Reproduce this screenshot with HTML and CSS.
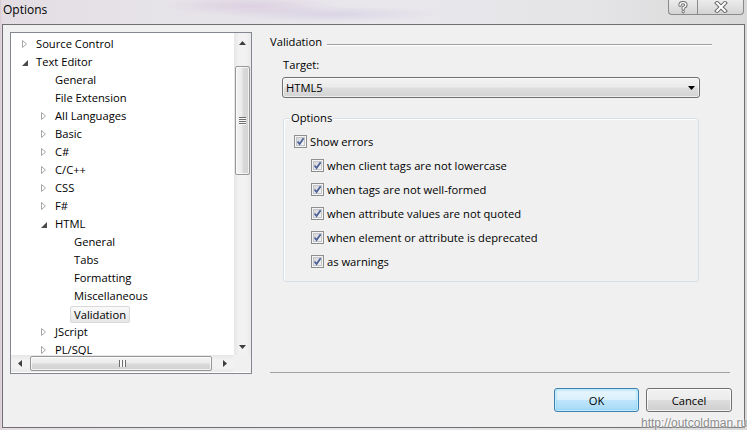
FILE: index.html
```html
<!DOCTYPE html>
<html>
<head>
<meta charset="utf-8">
<title>Options</title>
<link rel="stylesheet" href="styles.css">
</head>
<body>
<svg class="defs" width="0" height="0">
  <defs>
    <linearGradient id="cbIn" x1="0" y1="0" x2="1" y2="1">
      <stop offset="0" stop-color="#cfd2d8"/>
      <stop offset="1" stop-color="#f7f7f7"/>
    </linearGradient>
    <symbol id="cb" viewBox="0 0 13 13">
      <rect x="0.5" y="0.5" width="12" height="12" fill="#f4f4f4" stroke="#8e8f8f"/>
      <rect x="2.5" y="2.5" width="8" height="8" fill="url(#cbIn)" stroke="#c3c5c9"/>
      <path d="M3.6 6.4 L5.6 9 L9.6 3.3" fill="none" stroke="#4a5e95" stroke-width="1.7"/>
    </symbol>
    <symbol id="col" viewBox="0 0 5 8">
      <path d="M0.5 0.5 L4.5 4 L0.5 7.5 Z" fill="#fff" stroke="#a6a6a6"/>
    </symbol>
    <symbol id="exp" viewBox="0 0 6 6">
      <path d="M6 0 L6 6 L0 6 Z" fill="#4a4a4a"/>
    </symbol>
  </defs>
</svg>
<div class="window">
  <div class="titlebar">
    <span class="title">Options</span>
    <div class="caption">
      <span class="cap-btn help">
        <svg width="12" height="13" viewBox="0 0 12 13">
          <path d="M3 4.2 Q3 1.6 6 1.6 Q9 1.6 9 4 Q9 5.6 6.2 6.6 L6.2 8" fill="none" stroke="#6a6a6a" stroke-width="3.2" stroke-linecap="round"/>
          <circle cx="6.2" cy="10.8" r="1.6" fill="#6a6a6a"/>
          <path d="M3 4.2 Q3 1.6 6 1.6 Q9 1.6 9 4 Q9 5.6 6.2 6.6 L6.2 8" fill="none" stroke="#fff" stroke-width="1.4" stroke-linecap="round"/>
          <circle cx="6.2" cy="10.8" r="0.8" fill="#fff"/>
        </svg>
      </span>
      <span class="cap-btn close">
        <svg width="14" height="12" viewBox="0 0 14 12">
          <path d="M3 2 L11 10 M11 2 L3 10" stroke="#6a6a6a" stroke-width="4" stroke-linecap="square"/>
          <path d="M3 2 L11 10 M11 2 L3 10" stroke="#fff" stroke-width="2" stroke-linecap="square"/>
        </svg>
      </span>
    </div>
  </div>

  <div class="frame">
    <div class="tree">
      <div class="tree-body">
        <ul class="tree-list">
          <li class="row l0"><span class="exp"><svg class="tri-c"><use href="#col"/></svg></span><span class="txt">Source Control</span></li>
          <li class="row l0"><span class="exp"><svg class="tri-e"><use href="#exp"/></svg></span><span class="txt">Text Editor</span></li>
          <li class="row l1"><span class="exp"></span><span class="txt">General</span></li>
          <li class="row l1"><span class="exp"></span><span class="txt">File Extension</span></li>
          <li class="row l1"><span class="exp"><svg class="tri-c"><use href="#col"/></svg></span><span class="txt">All Languages</span></li>
          <li class="row l1"><span class="exp"><svg class="tri-c"><use href="#col"/></svg></span><span class="txt">Basic</span></li>
          <li class="row l1"><span class="exp"><svg class="tri-c"><use href="#col"/></svg></span><span class="txt">C#</span></li>
          <li class="row l1"><span class="exp"><svg class="tri-c"><use href="#col"/></svg></span><span class="txt">C/C++</span></li>
          <li class="row l1"><span class="exp"><svg class="tri-c"><use href="#col"/></svg></span><span class="txt">CSS</span></li>
          <li class="row l1"><span class="exp"><svg class="tri-c"><use href="#col"/></svg></span><span class="txt">F#</span></li>
          <li class="row l1"><span class="exp"><svg class="tri-e"><use href="#exp"/></svg></span><span class="txt">HTML</span></li>
          <li class="row l2"><span class="exp"></span><span class="txt">General</span></li>
          <li class="row l2"><span class="exp"></span><span class="txt">Tabs</span></li>
          <li class="row l2"><span class="exp"></span><span class="txt">Formatting</span></li>
          <li class="row l2"><span class="exp"></span><span class="txt">Miscellaneous</span></li>
          <li class="row l2"><span class="exp"></span><span class="txt selected">Validation</span></li>
          <li class="row l1"><span class="exp"><svg class="tri-c"><use href="#col"/></svg></span><span class="txt">JScript</span></li>
          <li class="row l1"><span class="exp"><svg class="tri-c"><use href="#col"/></svg></span><span class="txt">PL/SQL</span></li>
        </ul>
        <div class="vscroll">
          <div class="sb-btn"><svg width="7" height="4" viewBox="0 0 7 4"><path d="M3.5 0 L7 4 L0 4 Z" fill="#3f3f3f"/></svg></div>
          <div class="vtrack"><div class="vthumb"><span class="grip-h"></span></div></div>
          <div class="sb-btn"><svg width="7" height="4" viewBox="0 0 7 4"><path d="M0 0 L7 0 L3.5 4 Z" fill="#3f3f3f"/></svg></div>
        </div>
      </div>
      <div class="hscroll">
        <div class="sb-btn"><svg width="4" height="7" viewBox="0 0 4 7"><path d="M0 3.5 L4 0 L4 7 Z" fill="#3f3f3f"/></svg></div>
        <div class="htrack"><div class="hthumb"><span class="grip-v"></span></div></div>
        <div class="sb-btn"><svg width="4" height="7" viewBox="0 0 4 7"><path d="M4 3.5 L0 0 L0 7 Z" fill="#3f3f3f"/></svg></div>
        <div class="corner"></div>
      </div>
    </div>

    <div class="panel">
      <div class="section-head"><span>Validation</span><span class="rule"></span></div>
      <div class="label">Target:</div>
      <div class="select"><span>HTML5</span><svg width="7" height="4" viewBox="0 0 7 4"><path d="M0 0 L7 0 L3.5 4 Z" fill="#000"/></svg></div>
      <div class="group">
        <div class="legend">Options</div>
        <div class="rows">
          <div class="check"><svg class="cb"><use href="#cb"/></svg><span>Show errors</span></div>
          <div class="check sub"><svg class="cb"><use href="#cb"/></svg><span>when client tags are not lowercase</span></div>
          <div class="check sub"><svg class="cb"><use href="#cb"/></svg><span>when tags are not well-formed</span></div>
          <div class="check sub"><svg class="cb"><use href="#cb"/></svg><span>when attribute values are not quoted</span></div>
          <div class="check sub"><svg class="cb"><use href="#cb"/></svg><span>when element or attribute is deprecated</span></div>
          <div class="check sub"><svg class="cb"><use href="#cb"/></svg><span>as warnings</span></div>
        </div>
      </div>
      <div class="sep"></div>
      <div class="buttons">
        <button class="btn ok">OK</button>
        <button class="btn cancel">Cancel</button>
      </div>
    </div>
  </div>
  <div class="watermark">http://outcoldman.ru</div>
</div>
</body>
</html>
```

FILE: styles.css
```css
* { box-sizing: border-box; }

html, body {
  margin: 0;
  padding: 0;
  width: 747px;
  height: 430px;
  overflow: hidden;
}

body {
  font-family: "Open Sans", "Noto Sans", sans-serif;
  font-size: 11.2px;
  color: #000;
}

.defs { position: absolute; width: 0; height: 0; }

.window {
  position: relative;
  width: 747px;
  height: 430px;
  background:
    radial-gradient(ellipse 90px 10px at 250px 6px, rgba(200, 170, 210, 0.35), transparent),
    radial-gradient(ellipse 110px 8px at 330px 14px, rgba(185, 170, 215, 0.3), transparent),
    linear-gradient(to right, #d9c9d3 0, #e3dde3 2px, #e6e3e8 20%, #e9e7ec 50%, #e4e4e6 80%, #d8d8d8 100%);
  display: flex;
  flex-direction: column;
}

/* Title bar */
.titlebar {
  height: 24px;
  display: flex;
  align-items: flex-start;
  flex-shrink: 0;
}

.title {
  margin: 2px 0 0 3px;
  font-size: 12px;
  line-height: 16px;
}

.caption {
  margin-left: auto;
  margin-right: 3px;
  display: flex;
  height: 15px;
}

.cap-btn {
  height: 15px;
  display: flex;
  align-items: center;
  justify-content: center;
  border: 1px solid #8a8a8a;
  border-top: none;
  background: linear-gradient(#ececec, #e0e0e0 50%, #d4d4d4);
}

.cap-btn.help {
  width: 29px;
  border-radius: 0 0 0 4px;
  border-right: none;
}

.cap-btn.close {
  width: 47px;
  border-radius: 0 0 4px 0;
}

/* Client frame */
.frame {
  margin-left: 2px;
  width: 743px;
  height: 404px;
  border: 1px solid #6f6f6f;
  background: #f0f0f0;
  padding: 7px 0 0 7px;
  display: flex;
  align-items: flex-start;
}

/* Tree view */
.tree {
  width: 242px;
  height: 342px;
  border: 1px solid #828790;
  background: #fff;
  display: flex;
  flex-direction: column;
  flex-shrink: 0;
}

.tree-body {
  height: 322px;
  display: flex;
}

.tree-list {
  flex: 1;
  margin: 0;
  padding: 2px 0 0 0;
  list-style: none;
  overflow: hidden;
}

.row {
  height: 18px;
  display: flex;
  align-items: center;
  white-space: nowrap;
}

.row.l0 { padding-left: 8px; }
.row.l1 { padding-left: 27px; }
.row.l2 { padding-left: 46px; }

.exp {
  width: 17px;
  height: 18px;
  display: flex;
  align-items: center;
  justify-content: flex-end;
  padding-right: 9px;
  flex-shrink: 0;
}

.tri-c { width: 5px; height: 8px; }
.tri-e { width: 6px; height: 6px; margin-top: 2px; margin-right: -1px; }

.txt {
  line-height: 16px;
}

.txt.selected {
  margin-left: -4px;
  padding: 0 3px;
  height: 17px;
  line-height: 15px;
  border: 1px solid #d9d9d9;
  border-radius: 2px;
  background: linear-gradient(#fafafa, #e6e6e6);
}

/* Scrollbars */
.vscroll {
  width: 17px;
  display: flex;
  flex-direction: column;
  background: linear-gradient(to right, #e6e6e6, #f2f2f2 30%, #f2f2f2 70%, #e9e9e9);
  flex-shrink: 0;
}

.sb-btn {
  width: 17px;
  height: 17px;
  display: flex;
  align-items: center;
  justify-content: center;
  flex-shrink: 0;
}

.vscroll .sb-btn:first-child { padding-top: 3px; }

.vtrack {
  flex: 1;
  padding-top: 16px;
}

.vthumb {
  margin-left: 1px;
  width: 15px;
  height: 109px;
  border: 1px solid #979797;
  border-radius: 2px;
  background: linear-gradient(to right, #f4f4f4, #ebebeb 45%, #dadada 55%, #d2d2d2);
  box-shadow: inset 0 0 0 1px rgba(255, 255, 255, 0.7);
  display: flex;
  align-items: center;
  justify-content: center;
}

.grip-h {
  width: 7px;
  height: 8px;
  background: repeating-linear-gradient(#6d6d6d 0 1px, #f8f8f8 1px 2px);
}

.hscroll {
  height: 17px;
  display: flex;
  background: linear-gradient(#e6e6e6, #f2f2f2 30%, #f2f2f2 70%, #e9e9e9);
}

.htrack {
  width: 188px;
  padding-left: 2px;
  display: flex;
  align-items: center;
}

.hthumb {
  width: 182px;
  height: 15px;
  border: 1px solid #979797;
  border-radius: 2px;
  background: linear-gradient(#f4f4f4, #ebebeb 45%, #dadada 55%, #d2d2d2);
  box-shadow: inset 0 0 0 1px rgba(255, 255, 255, 0.7);
  display: flex;
  align-items: center;
  justify-content: center;
}

.grip-v {
  width: 7px;
  height: 7px;
  background: repeating-linear-gradient(to right, #6d6d6d 0 1px, #f8f8f8 1px 3px);
  margin-left: 2px;
}

.corner {
  width: 17px;
  height: 17px;
  background: #f0f0f0;
}

/* Right panel */
.panel {
  margin-left: 18px;
  width: 462px;
  align-self: stretch;
  display: flex;
  flex-direction: column;
  padding: 2px 0 15px 0;
}

.section-head {
  width: 442px;
  height: 16px;
  line-height: 16px;
  display: flex;
}

.rule {
  flex: 1;
  margin: 10px 0 0 5px;
  height: 1px;
  background: #a0a0a0;
  box-shadow: 0 1px 0 #fff;
}

.label {
  margin: 7px 0 0 13px;
  line-height: 16px;
  height: 16px;
}

.select {
  margin: 4px 0 0 12px;
  width: 418px;
  height: 21px;
  border: 1px solid #707070;
  border-radius: 3px;
  background: linear-gradient(#f3f3f3, #ebebeb 45%, #dddddd 55%, #d3d3d3);
  box-shadow: inset 0 0 0 1px rgba(255, 255, 255, 0.6);
  display: flex;
  align-items: center;
  padding: 0 4px 0 3px;
}

.select span { flex: 1; line-height: 16px; }

.group {
  margin: 20px 0 0 13px;
  width: 416px;
  height: 164px;
  border: 1px solid #d5dfe5;
  border-radius: 3px;
  box-shadow: inset 1px 1px 0 #fff;
  display: flex;
  flex-direction: column;
}

.legend {
  align-self: flex-start;
  margin: -9px 0 0 6px;
  padding: 0 1px;
  line-height: 16px;
  height: 16px;
  background: #f0f0f0;
}

.rows {
  padding: 3px 0 0 10px;
  display: flex;
  flex-direction: column;
}

.check {
  height: 24px;
  display: flex;
  align-items: center;
  white-space: nowrap;
}

.check.sub { margin-left: 17px; }

.cb {
  width: 13px;
  height: 13px;
  margin-right: 3px;
  flex-shrink: 0;
}

.sep {
  margin-top: auto;
  width: 460px;
  height: 1px;
  background: #a0a0a0;
  flex-shrink: 0;
}

.buttons {
  margin-top: 15px;
  display: flex;
  justify-content: flex-end;
  gap: 7px;
}

.btn {
  width: 86px;
  height: 24px;
  font-family: inherit;
  font-size: 11.2px;
  color: #000;
  border: 1px solid #707070;
  border-radius: 3px;
  padding: 0;
  background: linear-gradient(#f2f2f2, #ebebeb 50%, #dddddd 50%, #cfcfcf);
  box-shadow: inset 0 0 0 1px rgba(255, 255, 255, 0.75);
}

.btn.ok {
  width: 85px;
  border-color: #3c7fb1;
  background: linear-gradient(#eaf6fd, #d9f0fc 50%, #bee6fd 50%, #a7d9f5);
  box-shadow: inset 0 0 0 1px #c6ecfb, inset 0 0 2px 1px #6fd0f5;
}

/* Watermark overlay */
.watermark {
  position: absolute;
  left: 641px;
  top: 416px;
  font-family: "Liberation Sans", Arial, sans-serif;
  font-size: 12px;
  line-height: 14px;
  color: #8c8c8c;
  white-space: nowrap;
  text-shadow: 0 0 2px #fff, 0 0 2px #fff;
}
```
